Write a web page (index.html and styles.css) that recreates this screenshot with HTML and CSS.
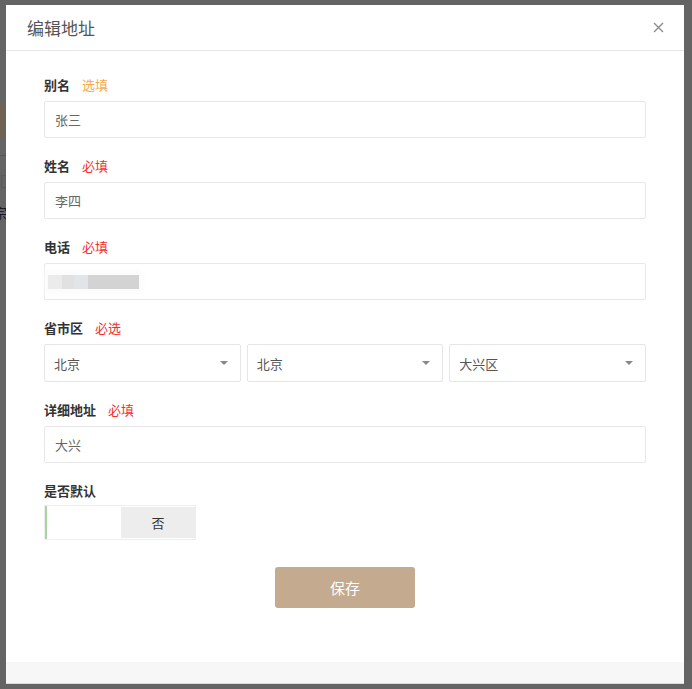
FILE: index.html
```html
<!DOCTYPE html>
<html lang="zh-CN">
<head>
<meta charset="utf-8">
<title>编辑地址</title>
<link rel="stylesheet" href="styles.css">
</head>
<body>
<div class="bg-page">
  <div class="bg-btn"></div>
  <div class="bg-line"></div>
  <div class="bg-box"></div>
  <div class="bg-text">宗</div>
</div>
<div class="overlay">
  <div class="modal">
    <div class="modal-header">
      <span class="modal-title">编辑地址</span>
      <svg class="close" width="11" height="11" viewBox="0 0 11 11"><path d="M1 1 L10 10 M10 1 L1 10" stroke="#8c8c8c" stroke-width="1.4" fill="none"/></svg>
    </div>
    <div class="modal-body">
      <div class="group">
        <div class="label">别名<span class="hint hint-opt">选填</span></div>
        <div class="input">张三</div>
      </div>
      <div class="group">
        <div class="label">姓名<span class="hint hint-req">必填</span></div>
        <div class="input">李四</div>
      </div>
      <div class="group">
        <div class="label">电话<span class="hint hint-req">必填</span></div>
        <div class="input input-phone"><span class="blur"></span></div>
      </div>
      <div class="group">
        <div class="label">省市区<span class="hint hint-req">必选</span></div>
        <div class="selects">
          <div class="select"><span>北京</span><span class="caret"></span></div>
          <div class="select"><span>北京</span><span class="caret"></span></div>
          <div class="select"><span>大兴区</span><span class="caret"></span></div>
        </div>
      </div>
      <div class="group">
        <div class="label">详细地址<span class="hint hint-req">必填</span></div>
        <div class="input">大兴</div>
      </div>
      <div class="group group-last">
        <div class="label">是否默认</div>
        <div class="toggle">
          <div class="toggle-on"></div>
          <div class="toggle-off">否</div>
        </div>
      </div>
      <div class="actions">
        <button class="save">保存</button>
      </div>
    </div>
    <div class="modal-footer"></div>
  </div>
</div>
</body>
</html>
```
FILE: styles.css
```css
html, body {
  margin: 0;
  padding: 0;
  height: 100%;
}
body {
  font-family: "Noto Sans CJK SC", "Noto Sans", "Liberation Sans", sans-serif;
  background: #c8c8c8;
  overflow: hidden;
}
.bg-page {
  padding-top: 103px;
}
.bg-btn {
  width: 8px;
  height: 35px;
  background: #dcc4a6;
}
.bg-line {
  width: 8px;
  height: 1px;
  margin-top: 17px;
  background: #a8a8a8;
}
.bg-box {
  width: 6px;
  height: 11px;
  margin-top: 19px;
  margin-left: 1px;
  border: 1px solid #9ccc7c;
  border-right: none;
}
.bg-text {
  margin-top: 18px;
  margin-left: -6px;
  font-size: 13px;
  color: #2a2a5a;
  line-height: 14px;
}
.overlay {
  position: fixed;
  inset: 0;
  background: rgba(0, 0, 0, 0.5);
  padding: 5px 8px 5px 6px;
  display: flex;
}
.modal {
  flex: 1;
  background: #fff;
  display: flex;
  flex-direction: column;
}
.modal-header {
  height: 45px;
  border-bottom: 1px solid #e8e8e8;
  display: flex;
  align-items: center;
  justify-content: space-between;
  padding: 0 20px 0 21px;
}
.modal-title {
  font-size: 17px;
  color: #555;
}
.close {
  display: block;
}
.modal-body {
  flex: 1;
  padding: 24px 38px 0 38px;
}
.group {
  margin-bottom: 18px;
}
.label {
  height: 20px;
  line-height: 20px;
  font-size: 13px;
  font-weight: bold;
  color: #333;
  margin-bottom: 6px;
}
.hint {
  font-weight: normal;
  margin-left: 12px;
}
.hint-opt {
  color: #f7a94b;
}
.hint-req {
  color: #f52d2d;
}
.input {
  height: 35px;
  border: 1px solid #e8e8e8;
  border-radius: 2px;
  padding: 0 10px;
  line-height: 35px;
  font-size: 13px;
  color: #666;
}
.input-phone {
  display: flex;
  align-items: center;
  padding-left: 3px;
}
.blur {
  display: block;
  width: 91px;
  height: 14px;
  background: linear-gradient(to right, #ebebeb 0, #ebebeb 14px, #e1e1e1 14px, #e1e1e1 26px, #e3e4e7 26px, #e3e4e7 40px, #d3d3d3 40px);
  box-shadow: 0 0 6px 4px #fbfbfb;
  filter: blur(0.6px);
}
.selects {
  display: grid;
  grid-template-columns: 1fr 1fr 1fr;
  gap: 6px;
}
.select {
  height: 36px;
  border: 1px solid #e6e6e6;
  border-radius: 2px;
  padding: 0 12px 0 9px;
  display: flex;
  align-items: center;
  justify-content: space-between;
  font-size: 13px;
  color: #555;
}
.caret {
  width: 0;
  height: 0;
  border-left: 4px solid transparent;
  border-right: 4px solid transparent;
  border-top: 4px solid #888;
}
.group-last {
  margin-bottom: 0;
}
.group-last .label {
  margin-bottom: 4px;
}
.toggle {
  width: 150px;
  height: 33px;
  border: 1px solid #eeeeee;
  display: flex;
}
.toggle-on {
  width: 74px;
  border-left: 2px solid #a9d3a2;
  background: #fff;
}
.toggle-off {
  flex: 1;
  background: #ededed;
  display: flex;
  align-items: center;
  justify-content: center;
  font-size: 13px;
  color: #333;
  margin: 1px 0;
}
.actions {
  display: flex;
  justify-content: center;
  padding-top: 27px;
}
.save {
  width: 140px;
  height: 41px;
  border: none;
  border-radius: 3px;
  background: #c4aa8e;
  color: #fff;
  font-family: inherit;
  font-size: 15px;
  padding: 0;
}
.modal-footer {
  height: 21px;
  background: #f7f7f7;
  border-bottom: 1px solid #dcdcdc;
}
```
